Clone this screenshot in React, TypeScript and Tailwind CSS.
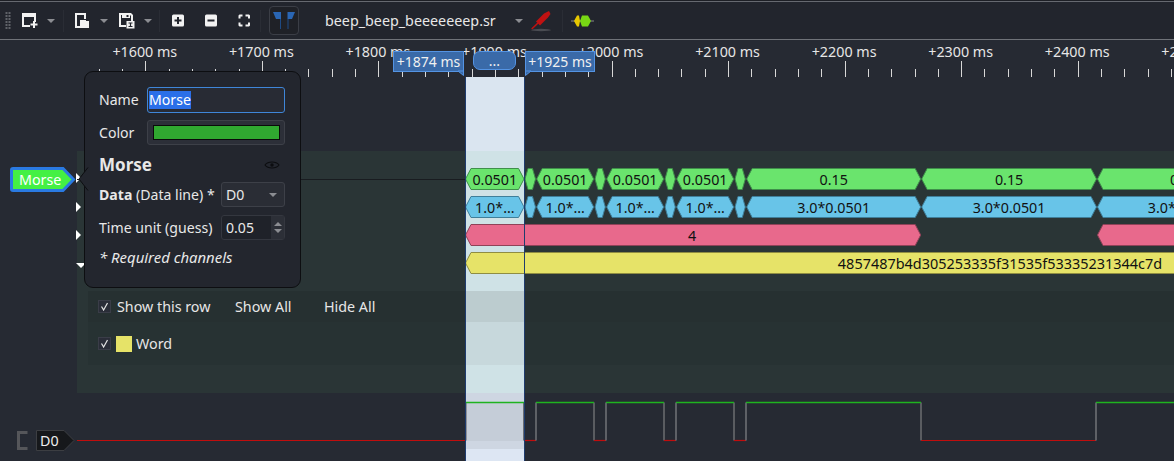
import React from "react";

const G = { fill: "#6ae46d", stroke: "#3f8f4a" };
const B = { fill: "#68c4e8", stroke: "#3f7f9a" };
const P = { fill: "#e8698c", stroke: "#8f4258" };
const Y = { fill: "#e6e368", stroke: "#8f8d42" };

const OX = 77;

function Seg({ x0, x1, c, t, openR, noteX }: { x0: number; x1: number; c: { fill: string; stroke: string }; t?: string; openR?: boolean; noteX?: number }) {
  const a = x0 - OX;
  const b = x1 - OX;
  const p = b - a < 20 ? 3 : 5.5;
  const pts = openR
    ? `${a},11 ${a + p},0.5 ${b},0.5 ${b},21.5 ${a + p},21.5`
    : `${a},11 ${a + p},0.5 ${b - p},0.5 ${b},11 ${b - p},21.5 ${a + p},21.5`;
  return (
    <>
      <polygon points={pts} fill={c.fill} stroke={c.stroke} strokeWidth="1" />
      {t ? (
        <text x={noteX !== undefined ? noteX - OX : (a + b) / 2} y="17" textAnchor="middle" fontSize="14.3" fill="#111">
          {t}
        </text>
      ) : null}
    </>
  );
}

const pulses: [number, number][] = [
  [465.5, 524],
  [536.7, 593.7],
  [606.7, 663.7],
  [676.7, 733.7],
  [746.7, 920.7],
  [921.7, 1096.5],
  [1097.5, 1271],
];
const gaps: [number, number][] = [
  [525, 535.5],
  [595, 605.3],
  [665, 675.3],
  [735, 745.3],
];

function AnnRow({ c, labels }: { c: { fill: string; stroke: string }; labels: string[] }) {
  return (
    <svg width="1097" height="22" className="block overflow-visible">
      {labels[0] === "0.0501" ? <line x1="0" y1="11.5" x2="388" y2="11.5" stroke="#191c20" strokeWidth="1" /> : null}
      {pulses.map((s, i) => (
        <Seg key={i} x0={s[0]} x1={s[1]} c={c} t={labels[i]} />
      ))}
      {gaps.map((s, i) => (
        <Seg key={i} x0={s[0]} x1={s[1]} c={c} />
      ))}
    </svg>
  );
}

function Ruler() {
  const majors = [0, 1, 2, 3, 4, 5, 6, 7, 8, 9];
  const x0 = 145.3;
  const step = 116.55;
  const ticks: React.ReactNode[] = [];
  for (let i = -1; i < 10; i++) {
    for (let k = 0; k < 5; k++) {
      const x = Math.round(x0 + i * step + (k * step) / 5) + 0.5;
      if (x < 90) continue;
      ticks.push(<line key={`${i}-${k}`} x1={x} x2={x} y1={k === 0 ? 21 : 29} y2="37" stroke="#d8d8d8" strokeWidth="1" />);
    }
  }
  return (
    <svg width="1174" height="37" className="block shrink-0">
      {ticks}
      {majors.map((i) => (
        <text key={i} x={x0 + i * step - 0.5} y="16.5" textAnchor="middle" fontSize="14.3" fill="#e6e6e6">
          +{1600 + i * 100} ms
        </text>
      ))}
    </svg>
  );
}

function Caret({ className = "" }: { className?: string }) {
  return <span className={`block w-0 h-0 border-x-[4px] border-x-transparent border-t-[4px] border-t-[#8b8d92] ${className}`} />;
}

function Sep({ className = "" }: { className?: string }) {
  return <span className={`block w-px h-[22px] bg-[#2a2d35] ${className}`} />;
}

function Toolbar() {
  return (
    <div className="h-[40px] shrink-0 bg-[#22252d] flex flex-col">
      <div className="h-px bg-[#1d1f25]" />
      <div className="h-px bg-[#666970]" />
      <div className="flex-1 flex items-center">
        <svg width="8" height="18" className="ml-[4px] mr-[9px]">
          {[1, 4, 7, 10, 13, 16].map((y) => (
            <g key={y} fill="#5f6269">
              <rect x="1.5" y={y - 1} width="2" height="2" />
              <rect x="4.5" y={y - 1} width="2" height="2" />
            </g>
          ))}
        </svg>
        <svg width="16" height="16" viewBox="0 0 16 16" fill="#f2f2f2" className="ml-[1px]">
          <path d="M0 0h14v9h-2V4H2v8h6v2H0z" />
          <path d="M11 8h2v2.5h2.5v2H13V15h-2v-2.5H8.5v-2H11z" />
        </svg>
        <Caret className="ml-[9px]" />
        <Sep className="ml-[8px]" />
        <svg width="16" height="16" viewBox="0 0 16 16" fill="#f2f2f2" className="ml-[11px]">
          <path d="M0 0h11v6H9V2H2v11h3v2H0z" />
          <path d="M5 7h6v1h3v7H5z" />
        </svg>
        <Caret className="ml-[9px]" />
        <svg width="16" height="16" viewBox="0 0 16 16" fill="#f2f2f2" className="ml-[11px]">
          <path d="M0 0h12l2 2v6h-2V3l-1-1v3H3V2H2v10h5v2H0z" />
          <rect x="7.5" y="2" width="2" height="2" fill="#22252d" />
          <rect x="7.5" y="8" width="8" height="7.5" />
          <path d="M9.5 9.5h4v1h-1.4v2.5h1.4v1h-4v-1h1.4v-2.5H9.5z" fill="#22252d" />
        </svg>
        <Caret className="ml-[9px]" />
        <Sep className="ml-[7px]" />
        <svg width="13" height="13" viewBox="0 0 13 13" className="ml-[12px]">
          <rect width="12" height="12" y="0.5" rx="1.5" fill="#f2f2f2" />
          <path d="M5 3h2v2.5h2.5v2H7V10H5V7.5H2.5v-2H5z" fill="#22252d" />
        </svg>
        <svg width="13" height="13" viewBox="0 0 13 13" className="ml-[20px]">
          <rect width="12" height="12" y="0.5" rx="1.5" fill="#f2f2f2" />
          <rect x="2.5" y="5.5" width="7" height="2" fill="#22252d" />
        </svg>
        <svg width="13" height="13" viewBox="0 0 13 13" fill="#f2f2f2" className="ml-[20px]">
          <path d="M1.5 0.5h3v2h-2v2h-2v-3zM7.5 0.5h3.5l1 1v3h-2v-2h-2.5zM0.5 8.5h2v2h2v2h-3l-1-1zM10 8.5h2v3l-1 1H7.5v-2H10z" />
        </svg>
        <Sep className="ml-[9px]" />
        <span className="ml-[8px] w-[30px] h-[29px] bg-[#1f2127] border border-[#3b3e46] rounded-[4px] flex items-center justify-center">
          <svg width="26" height="22" viewBox="0 0 26 22">
            <path d="M2 2H10V9H5z" fill="#2a66b4" />
            <rect x="9" y="9" width="1" height="10" fill="#1e4a84" />
            <path d="M24 2H16.5V9H21z" fill="#2a66b4" />
            <rect x="16.5" y="9" width="1" height="10" fill="#1e4a84" />
          </svg>
        </span>
        <span className="ml-[26px] text-[14.3px] text-[#e8e8e8] w-[190px]">beep_beep_beeeeeeep.sr</span>
        <Caret />
        <svg width="24" height="24" viewBox="0 0 24 24" className="ml-[6px]">
          <ellipse cx="12" cy="21" rx="10" ry="1.2" fill="#4a4c52" />
          <path d="M2.7 20 L9 14" stroke="#c01212" strokeWidth="1.6" />
          <path d="M7 12.5 L15 4.5 L16 4 L20 2 L21.5 5 L19 8.5 L11 16.5z" fill="#c01212" />
        </svg>
        <Sep className="ml-[9px]" />
        <svg width="24" height="14" viewBox="0 0 24 14" className="ml-[8px]">
          <rect x="0" y="6.5" width="23" height="1" fill="#888" />
          <path d="M3 7 L6 1.5 L8 1.5 L9 7 L8 12.5 L6 12.5z" fill="#e8c800" />
          <path d="M9 7 L11 1.5 L17 1.5 L20 7 L17 12.5 L11 12.5z" fill="#78d814" />
        </svg>
      </div>
      <div className="h-px bg-[#6f7278]" />
    </div>
  );
}

function Markers() {
  return (
    <>
      <div className="absolute left-[393px] top-[51px] z-40 w-[71px] h-[21px] bg-[#3a6aa8] border border-[#5494e4] flex items-center justify-center text-[14px] text-[#f0f0f0] whitespace-nowrap leading-none">
        +1874 ms
      </div>
      <svg width="8" height="6" className="absolute left-[458px] top-[70px] z-40">
        <path d="M0 1 H5.5 V5.5z" fill="#3a6aa8" stroke="#5494e4" />
      </svg>
      <div className="absolute left-[473px] top-[51px] z-40 w-[43px] h-[19px] rounded-[7px] bg-[#3a6aa8] border border-[#5494e4] flex items-center justify-center text-[14px] text-[#f0f0f0] leading-none">
        ...
      </div>
      <div className="absolute left-[525px] top-[51px] z-40 w-[70px] h-[21px] bg-[#3a6aa8] border border-[#5494e4] flex items-center justify-center text-[14px] text-[#f0f0f0] whitespace-nowrap leading-none">
        +1925 ms
      </div>
      <svg width="8" height="6" className="absolute left-[525px] top-[70px] z-40">
        <path d="M0.5 1 H6 L0.5 5.5z" fill="#3a6aa8" stroke="#5494e4" />
      </svg>
    </>
  );
}

function Popover() {
  return (
    <div className="absolute left-[84px] top-[71px] z-30 w-[217px] h-[217px] rounded-[9px] bg-[#23262e] border border-[#0d0e11] text-[14.1px] text-[#e8e8e8] pl-[14px] pr-[15px] pt-[15px]">
      <svg width="12" height="26" className="absolute left-[-8px] top-[95px]">
        <path d="M11 0.5 L2 12 L11 23.5" fill="#23262e" stroke="#0d0e11" />
      </svg>
      <div className="flex items-center h-[26px]">
        <span className="w-[48px]">Name</span>
        <div className="flex-1 h-[26px] border border-[#3f86d8] rounded-[3px] bg-[#282b34] pl-[1px] flex items-center">
          <span className="bg-[#2a6fe8] text-white leading-[18px]">Morse</span>
        </div>
      </div>
      <div className="flex items-center h-[25px] mt-[7px]">
        <span className="w-[48px]">Color</span>
        <div className="flex-1 h-[25px] border border-[#3d4048] rounded-[3px] bg-[#2c2f38] flex items-center justify-center">
          <span className="w-[127px] h-[15px] bg-[#30a830] border border-[#0a0a0a]" />
        </div>
      </div>
      <div className="flex items-center justify-between mt-[7px] h-[26px]">
        <span className="text-[17px] font-bold">Morse</span>
        <svg width="16" height="10" viewBox="0 0 16 10" className="mr-[5px]">
          <path d="M1 5 C4 1 12 1 15 5 C12 9 4 9 1 5z" fill="none" stroke="#0c0d10" strokeWidth="1.1" />
          <circle cx="8" cy="5" r="1.7" fill="#0c0d10" />
        </svg>
      </div>
      <div className="flex items-center justify-between h-[25px] mt-[4px]">
        <span><b>Data</b> (Data line) *</span>
        <div className="w-[64px] h-[25px] border border-[#3d4048] rounded-[3px] bg-[#2a2d35] flex items-center justify-between pl-[4px] pr-[7px]">
          <span>D0</span>
          <Caret />
        </div>
      </div>
      <div className="flex items-center justify-between h-[25px] mt-[8px]">
        <span>Time unit (guess)</span>
        <div className="w-[64px] h-[25px] border border-[#34373f] rounded-[3px] bg-[#1f2229] flex items-center justify-between pl-[4px]">
          <span>0.05</span>
          <span className="w-[13px] h-full bg-[#2c2f37] flex flex-col items-center justify-center gap-[3px]">
            <span className="w-0 h-0 border-x-[4px] border-x-transparent border-b-[4px] border-b-[#8b8d92]" />
            <span className="w-0 h-0 border-x-[4px] border-x-transparent border-t-[4px] border-t-[#8b8d92]" />
          </span>
        </div>
      </div>
      <div className="italic mt-[6px] text-[14.9px]">* Required channels</div>
    </div>
  );
}

function Selection() {
  return (
    <div className="absolute left-[465px] top-[77px] w-[60px] bottom-0 z-0 flex flex-col">
      <div className="h-[74px] bg-[#dae5f0]" />
      <div className="h-[140px] bg-[#cfe2e6]" />
      <div className="h-[31px] bg-[#bccccf]" />
      <div className="h-[43px] bg-[#c7d8dc]" />
      <div className="h-[28px] bg-[#cfe2e6]" />
      <div className="h-[10px] bg-[#ced6e2]" />
      <div className="h-[38px] bg-[#c5cdd8]" />
      <div className="h-[8px] bg-[#ced6e2]" />
      <div className="flex-1 bg-[#dde6f3]" />
    </div>
  );
}

function Wave() {
  const hi = 9.5;
  const lo = 47.5;
  const ox = OX;
  const edges: [number, number][] = [
    [466, 524],
    [536, 594],
    [606, 664],
    [676, 734],
    [746, 921],
    [1096, 1300],
  ];
  return (
    <svg width="1097" height="68" className="block relative z-10">
      <line x1="0" x2={466 - ox} y1={lo} y2={lo} stroke="#c00d0d" strokeWidth="1.2" />
      {edges.map(([a, b], i) => (
        <g key={i}>
          <line x1={a - ox} x2={a - ox} y1={hi} y2={lo} stroke="#77797d" strokeWidth="1.4" />
          <line x1={b - ox} x2={b - ox} y1={hi} y2={lo} stroke="#606266" strokeWidth="1.8" />
          <line x1={a - ox} x2={b - ox} y1={hi} y2={hi} stroke="#1fb31f" strokeWidth="1.4" />
          <line x1={b - ox} x2={(edges[i + 1]?.[0] ?? b) - ox} y1={lo} y2={lo} stroke="#c00d0d" strokeWidth="1.2" />
        </g>
      ))}
    </svg>
  );
}

function Check({ className = "" }: { className?: string }) {
  return (
    <span className={`w-[13px] h-[13px] bg-[#2a2d38] border border-[#3a3d48] flex items-center justify-center ${className}`}>
      <svg width="9" height="9" viewBox="0 0 9 9">
        <path d="M1.5 4.5 L3.6 8 L7.5 1" fill="none" stroke="#e4e4e4" strokeWidth="1.2" />
      </svg>
    </span>
  );
}

function LeftColumn() {
  return (
    <div className="w-[77px] shrink-0 flex flex-col relative z-10">
      <div className="h-[90px]" />
      <div className="ml-[10px] flex items-center h-[25px] relative">
        <svg width="66" height="25" className="absolute left-0 top-0">
          <path d="M3 1.5 H53 L63.5 12.5 L53 23.5 H3 Q1.5 23.5 1.5 22 V3 Q1.5 1.5 3 1.5z" fill="#44f044" stroke="#2a7ae2" strokeWidth="3" />
        </svg>
        <span className="relative ml-[9px] text-[14.3px] text-white">Morse</span>
      </div>
      <div className="ml-[76px] w-0 h-0 border-y-[5px] border-y-transparent border-l-[5px] border-l-white mt-[-19px]" />
      <div className="ml-[76px] w-0 h-0 border-y-[5px] border-y-transparent border-l-[5px] border-l-white mt-[19px]" />
      <div className="ml-[76px] w-0 h-0 border-y-[5px] border-y-transparent border-l-[5px] border-l-white mt-[18px]" />
      <div className="ml-[76px] w-0 h-0 border-x-[5px] border-x-transparent border-t-[5px] border-t-white mt-[23px]" />
      <div className="flex items-center absolute left-0 top-[353px] h-[21px]">
        <svg width="12" height="19" viewBox="0 0 12 19" className="ml-[17px]">
          <path d="M10.5 1.5 H1.5 V17.5 H10.5" fill="none" stroke="#55565a" strokeWidth="3" />
        </svg>
        <span className="relative ml-[7px] w-[39px] h-[21px] flex items-center">
          <svg width="39" height="21" className="absolute left-0 top-0">
            <path d="M0.5 0.5 H28 L38 10.5 L28 20.5 H0.5z" fill="#16181b" stroke="#3c3e42" />
          </svg>
          <span className="relative ml-[4px] text-[14.3px] text-[#eee]">D0</span>
        </span>
      </div>
    </div>
  );
}

function Trace() {
  return (
    <div className="flex-1 flex flex-col min-w-0">
      <div className="h-[74px]" />
      <div className="h-[140px] bg-[#2a3536] pt-[17px]">
        <div className="relative z-10 flex flex-col gap-[6px]">
          <AnnRow c={G} labels={["0.0501", "0.0501", "0.0501", "0.0501", "0.15", "0.15", "0.15"]} />
          <AnnRow c={B} labels={["1.0*…", "1.0*…", "1.0*…", "1.0*…", "3.0*0.0501", "3.0*0.0501", "3.0*0.0501"]} />
          <svg width="1097" height="22" className="block overflow-visible">
            <Seg x0={465.5} x1={920.7} c={P} t="4" noteX={692} />
            <Seg x0={1097.5} x1={1271} c={P} />
          </svg>
          <svg width="1097" height="22" className="block overflow-visible">
            <Seg x0={465.5} x1={1300} c={Y} openR />
            <text x="923" y="17" fontSize="14.45" fill="#111" textAnchor="middle">
              4857487b4d305253335f31535f53335231344c7d
            </text>
          </svg>
        </div>
      </div>
      <div className="h-[74px] bg-[#2a3536] flex">
        <div className="w-[11px]" />
        <div className="flex-1 flex flex-col bg-[#273233] text-[14.3px] text-[#e6e6e6]">
          <div className="h-[31px] bg-[#263031] flex items-center">
            <Check className="ml-[10px]" />
            <span className="ml-[6px] w-[118px]">Show this row</span>
            <span className="w-[89px]">Show All</span>
            <span>Hide All</span>
          </div>
          <div className="flex-1 flex items-center">
            <Check className="ml-[10px]" />
            <span className="ml-[5px] w-4 h-4 bg-[#e6e368]" />
            <span className="ml-[4px]">Word</span>
          </div>
        </div>
      </div>
      <div className="h-[28px] bg-[#2a3536]" />
      <Wave />
    </div>
  );
}

export default function App() {
  return (
    <div className="relative w-[1174px] h-[461px] overflow-hidden bg-[#262a33] font-['Noto_Sans',sans-serif] flex flex-col">
      <Toolbar />
      <Ruler />
      <div className="flex-1 flex">
        <LeftColumn />
        <Trace />
      </div>
      <Selection />
      <div className="absolute left-[465px] top-[77px] w-[60px] bottom-0 z-20 border-x border-x-[#1f3c6e]" />
      <Markers />
      <Popover />
    </div>
  );
}
